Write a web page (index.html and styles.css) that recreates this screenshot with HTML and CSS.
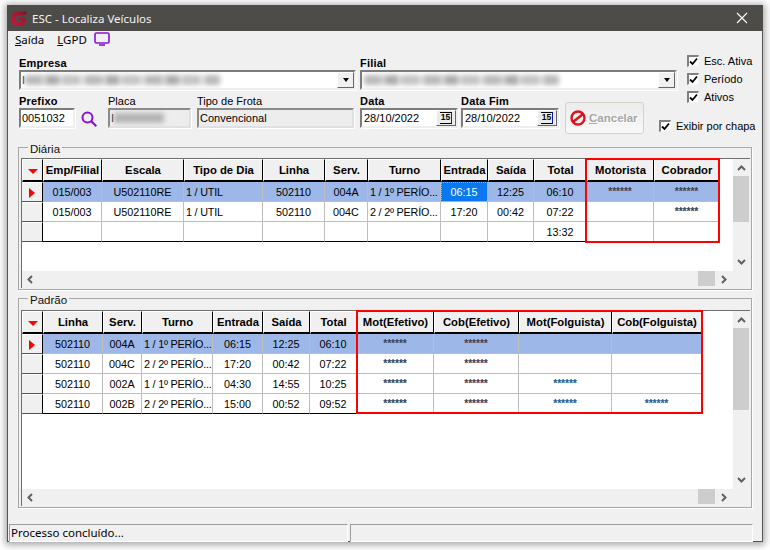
FILE: index.html
```html
<!DOCTYPE html>
<html lang="pt">
<head>
<meta charset="utf-8">
<title>ESC - Localiza Veículos</title>
<link rel="stylesheet" href="styles.css">
</head>
<body>
<div class="window">
  <header class="titlebar">
    <svg class="logo" viewBox="0 0 16 15" width="16" height="15"><defs><linearGradient id="lg" x1="0" y1="1" x2="1" y2="0"><stop offset="0" stop-color="#c81a3c"/><stop offset=".6" stop-color="#a5152f"/><stop offset="1" stop-color="#6e1a28"/></linearGradient></defs><path d="M16 .5H7C3 .5 0 3.800 0 8c0 4 3 6.800 7 6.800h6L14.700 6.500H7.300L6.800 9h3.400l-.5 2.300H7.500c-1.900 0-3.200-1.400-3.200-3.300 0-2.200 1.600-3.800 3.700-3.800h7z" fill="url(#lg)"/></svg>
    <span class="title-text">ESC - Localiza Veículos</span>
    <svg class="close" viewBox="0 0 12 12" width="12" height="12"><path d="M1 1l10 10M11 1L1 11" stroke="#fff" stroke-width="1.100" fill="none"/></svg>
  </header>
  <nav class="menu">
    <span class="menu-item"><u>S</u>aída</span>
    <span class="menu-item"><u>L</u>GPD</span>
    <svg class="tv" viewBox="0 0 16 15" width="16" height="15"><rect x="1" y="1" width="14" height="10" rx="1.500" fill="none" stroke="#8a10d8" stroke-width="1.600"/><path d="M5 13h6" stroke="#8a10d8" stroke-width="1.600"/></svg>
  </nav>
  <section class="form">
    <div class="row-one">
      <div class="field f-empresa">
        <label class="lbl-strong">Empresa</label>
        <div class="input input-white">
          <span class="cursor">I</span><span class="blur b-empresa"></span>
          <span class="combo-btn"><i class="combo-arrow"></i></span>
        </div>
      </div>
      <div class="field f-filial">
        <label class="lbl-strong">Filial</label>
        <div class="input input-white">
          <span class="blur b-filial"></span>
          <span class="combo-btn"><i class="combo-arrow"></i></span>
        </div>
      </div>
    </div>
    <div class="row-two">
      <div class="field f-prefixo">
        <label class="lbl-strong">Prefixo</label>
        <div class="input input-white"><span class="val">0051032</span></div>
      </div>
      <svg class="search" viewBox="0 0 16 16" width="16" height="16"><circle cx="6.500" cy="6.500" r="5" fill="none" stroke="#8a10d8" stroke-width="2"/><path d="M10.300 10.300l5 5" stroke="#8a10d8" stroke-width="2.200"/></svg>
      <div class="field f-placa">
        <label class="lbl">Placa</label>
        <div class="input input-gray"><span class="cursor">I</span><span class="blur b-placa"></span></div>
      </div>
      <div class="field f-tipo">
        <label class="lbl">Tipo de Frota</label>
        <div class="input input-gray"><span class="val">Convencional</span></div>
      </div>
      <div class="field f-data">
        <label class="lbl-strong">Data</label>
        <div class="input input-white"><span class="val val-date">28/10/2022</span><span class="date-btn"><b class="cal">15</b></span></div>
      </div>
      <div class="field f-datafim">
        <label class="lbl-strong">Data Fim</label>
        <div class="input input-white"><span class="val val-date">28/10/2022</span><span class="date-btn"><b class="cal">15</b></span></div>
      </div>
      <button class="cancel" type="button">
        <svg viewBox="0 0 16 16" width="16" height="16"><circle cx="8" cy="8" r="6.500" fill="none" stroke="#e0101c" stroke-width="2.400"/><path d="M3.500 11.500l9-7" stroke="#e0101c" stroke-width="2.600"/></svg>
        <span><u>C</u>ancelar</span>
      </button>
    </div>
    <div class="checks">
      <label class="check"><span class="box"><svg viewBox="0 0 9 9" width="9" height="9"><path d="M1 4.500l2.500 2.500L8 1.500" fill="none" stroke="#000" stroke-width="1.800"/></svg></span>Esc. Ativa</label>
      <label class="check"><span class="box"><svg viewBox="0 0 9 9" width="9" height="9"><path d="M1 4.500l2.500 2.500L8 1.500" fill="none" stroke="#000" stroke-width="1.800"/></svg></span>Período</label>
      <label class="check"><span class="box"><svg viewBox="0 0 9 9" width="9" height="9"><path d="M1 4.500l2.500 2.500L8 1.500" fill="none" stroke="#000" stroke-width="1.800"/></svg></span>Ativos</label>
    </div>
    <label class="check check-chapa"><span class="box"><svg viewBox="0 0 9 9" width="9" height="9"><path d="M1 4.500l2.500 2.500L8 1.500" fill="none" stroke="#000" stroke-width="1.800"/></svg></span>Exibir por chapa</label>
  </section>

  <fieldset class="group group-diaria">
    <legend>Diária</legend>
    <div class="grid-frame grid-frame-diaria">
      <div class="grid-body">
        <table class="grid grid-diaria">
          <colgroup><col class="w21"><col class="w59"><col class="w82"><col class="w79"><col class="w62"><col class="w43"><col class="w73"><col class="w47"><col class="w46"><col class="w53"><col class="w67"><col class="w66"></colgroup>
          <thead><tr><th class="ind"><i class="tri-down"></i></th><th>Emp/Filial</th><th>Escala</th><th>Tipo de Dia</th><th>Linha</th><th>Serv.</th><th>Turno</th><th>Entrada</th><th>Saída</th><th>Total</th><th>Motorista</th><th>Cobrador</th></tr></thead>
          <tbody>
            <tr class="sel"><td class="ind"><i class="tri-right"></i></td><td>015/003</td><td>U502110RE</td><td class="left">1 / UTIL</td><td>502110</td><td>004A</td><td class="left">1 / 1º PERÍO...</td><td class="focus">06:15</td><td>12:25</td><td>06:10</td><td class="stars">******</td><td class="stars">******</td></tr>
            <tr><td class="ind"></td><td>015/003</td><td>U502110RE</td><td class="left">1 / UTIL</td><td>502110</td><td>004C</td><td class="left">2 / 2º PERÍO...</td><td>17:20</td><td>00:42</td><td>07:22</td><td></td><td class="stars">******</td></tr>
            <tr class="last"><td class="ind"></td><td></td><td></td><td></td><td></td><td></td><td></td><td></td><td></td><td>13:32</td><td></td><td></td></tr>
          </tbody>
        </table>
        <div class="red-box red-diaria"></div>
      </div>
      <div class="vbar"><svg class="arrow" viewBox="0 0 9 6" width="9" height="6"><path d="M1 5l3.500-3.500L8 5" fill="none" stroke="#606060" stroke-width="2"/></svg><span class="spacer"></span><span class="vthumb vthumb-d"></span><span class="grow"></span><svg class="arrow" viewBox="0 0 9 6" width="9" height="6"><path d="M1 1l3.500 3.500L8 1" fill="none" stroke="#606060" stroke-width="2"/></svg></div>
      <div class="hbar"><svg class="arrow" viewBox="0 0 6 9" width="6" height="9"><path d="M5 1L1.500 4.500 5 8" fill="none" stroke="#606060" stroke-width="2"/></svg><span class="grow"></span><span class="hthumb"></span><svg class="arrow arrow-r" viewBox="0 0 6 9" width="6" height="9"><path d="M1 1l3.500 3.500L1 8" fill="none" stroke="#606060" stroke-width="2"/></svg></div>
    </div>
  </fieldset>

  <fieldset class="group group-padrao">
    <legend>Padrão</legend>
    <div class="grid-frame grid-frame-padrao">
      <div class="grid-body">
        <table class="grid grid-padrao">
          <colgroup><col class="w21"><col class="w60"><col class="w39"><col class="w71"><col class="w50"><col class="w47"><col class="w47"><col class="w77"><col class="w85"><col class="w93"><col class="w90"></colgroup>
          <thead><tr><th class="ind"><i class="tri-down"></i></th><th>Linha</th><th>Serv.</th><th>Turno</th><th>Entrada</th><th>Saída</th><th>Total</th><th>Mot(Efetivo)</th><th>Cob(Efetivo)</th><th>Mot(Folguista)</th><th>Cob(Folguista)</th></tr></thead>
          <tbody>
            <tr class="sel"><td class="ind"><i class="tri-right"></i></td><td>502110</td><td>004A</td><td class="left">1 / 1º PERÍO...</td><td>06:15</td><td>12:25</td><td>06:10</td><td class="stars">******</td><td class="stars">******</td><td></td><td></td></tr>
            <tr><td class="ind"></td><td>502110</td><td>004C</td><td class="left">2 / 2º PERÍO...</td><td>17:20</td><td>00:42</td><td>07:22</td><td class="stars">******</td><td class="stars">******</td><td></td><td></td></tr>
            <tr><td class="ind"></td><td>502110</td><td>002A</td><td class="left">1 / 1º PERÍO...</td><td>04:30</td><td>14:55</td><td>10:25</td><td class="stars">******</td><td class="stars">******</td><td class="stars stars-blue">******</td><td></td></tr>
            <tr class="last"><td class="ind"></td><td>502110</td><td>002B</td><td class="left">2 / 2º PERÍO...</td><td>15:00</td><td>00:52</td><td>09:52</td><td class="stars">******</td><td class="stars">******</td><td class="stars stars-blue">******</td><td class="stars stars-blue">******</td></tr>
          </tbody>
        </table>
        <div class="red-box red-padrao"></div>
      </div>
      <div class="vbar"><svg class="arrow" viewBox="0 0 9 6" width="9" height="6"><path d="M1 5l3.500-3.500L8 5" fill="none" stroke="#606060" stroke-width="2"/></svg><span class="spacer"></span><span class="vthumb vthumb-p"></span><span class="grow"></span><svg class="arrow" viewBox="0 0 9 6" width="9" height="6"><path d="M1 1l3.500 3.500L8 1" fill="none" stroke="#606060" stroke-width="2"/></svg></div>
      <div class="hbar"><svg class="arrow" viewBox="0 0 6 9" width="6" height="9"><path d="M5 1L1.500 4.500 5 8" fill="none" stroke="#606060" stroke-width="2"/></svg><span class="grow"></span><span class="hthumb"></span><svg class="arrow arrow-r" viewBox="0 0 6 9" width="6" height="9"><path d="M1 1l3.500 3.500L1 8" fill="none" stroke="#606060" stroke-width="2"/></svg></div>
    </div>
  </fieldset>

  <footer class="status">
    <div class="status-main">Processo concluído...</div>
    <div class="status-side"></div>
  </footer>
</div>
</body>
</html>
```
FILE: styles.css
```css
* { box-sizing: border-box; }
html, body { margin: 0; padding: 0; background: #fff; }
body { width: 770px; height: 550px; overflow: hidden; font: 11px "Liberation Sans", Arial, sans-serif; color: #000; }

.window { margin: 5px 0 0 7px; width: 756px; height: 537px; background: #f0f0f0; border: 1px solid #555; border-top: 0; box-shadow: 0 1px 7px 2px rgba(0,0,0,.35); display: flex; flex-direction: column; }

.titlebar { height: 26px; margin: 0 -1px; background: #4e4c49; display: flex; align-items: center; padding: 0 15px 0 4px; color: #fff; flex: none; }
.logo { flex: none; }
.title-text { margin-left: 5px; font: 11.500px "Noto Sans", sans-serif; color: #f4f4f4; }
.close { margin-left: auto; }

.menu { height: 17px; flex: none; display: flex; align-items: center; padding-left: 7px; gap: 13px; font: 11.500px "Noto Sans", sans-serif; }
.tv { margin-left: -6px; }

.form { flex: none; height: 97px; padding: 9px 0 0 11px; display: grid; grid-template-columns: 640px 28px 1fr; grid-template-rows: 38px 1fr; }
.row-one { grid-column: 1 / 3; grid-row: 1; display: flex; gap: 4px; }
.row-two { grid-column: 1; grid-row: 2; display: flex; align-items: flex-start; }
.field { display: flex; flex-direction: column; }
.f-empresa { width: 337px; }
.f-filial { width: 317px; }
.f-prefixo { width: 56px; }
.f-placa { width: 83px; }
.f-tipo { width: 157px; margin-left: 6px; }
.f-data { width: 98px; margin-left: 6px; }
.f-datafim { width: 98px; margin-left: 3px; }
.lbl-strong, .lbl { height: 13px; line-height: 13px; white-space: nowrap; }
.lbl-strong { font-size: 11px; font-weight: 700; letter-spacing: .2px; }
.lbl { font-size: 11px; }
.input { height: 20px; position: relative; display: flex; align-items: center; border: 2px solid; border-color: #7c7c7c #eee #eee #7c7c7c; box-shadow: 1px 1px 0 #fff; overflow: hidden; font-size: 11px; white-space: nowrap; }
.input-white { background: #fff; }
.input-gray { background: #ededed; border-color: #8a8a8a #e0e0e0 #e0e0e0 #8a8a8a; }
.val { padding-left: 1px; }
.val-date { padding-left: 2px; }
.cursor { padding-left: 1px; color: #333; width: 4px; flex: none; }
.blur { display: block; height: 10px; filter: blur(2.500px); background: repeating-linear-gradient(90deg, #a8a8a8 0 17px, #d2d2d2 17px 21px, #969696 21px 34px, #dcdcdc 34px 37px, #b4b4b4 37px 55px, #d8d8d8 55px 60px); opacity: .8; flex: none; }
.b-empresa { width: 195px; }
.b-filial { width: 195px; margin-left: 2px; }
.b-placa { width: 50px; background: #a6a6a6; }

.combo-btn { position: absolute; right: 0; top: 0; width: 17px; height: 16px; background: #f0f0f0; border: 1px solid; border-color: #fff #666 #666 #fff; display: flex; align-items: center; justify-content: center; }
.combo-arrow { display: block; width: 0; height: 0; border: 3.500px solid transparent; border-top: 4px solid #000; border-bottom: 0; }
.date-btn { position: absolute; right: 0; top: 0; width: 20px; height: 16px; background: #ececec; border: 1px solid; border-color: #fff #666 #666 #fff; display: flex; align-items: center; justify-content: center; }
.cal { font: 700 8.500px/9px "Liberation Sans", sans-serif; color: #000; border-right: 1px solid #1018b0; border-bottom: 1px solid #000; border-top: 1px solid #000; width: 12px; height: 12px; text-align: center; display: block; }

.search { flex: none; margin: 16px 11px 0 6px; }
.cancel { margin: 7px 0 0 6px; width: 79px; height: 32px; padding: 0 0 0 4px; background: linear-gradient(#ececec, #f8f8f8); border: 1px solid #d6d2ca; border-radius: 3px; display: flex; align-items: center; gap: 3px; font: 700 11.500px "Liberation Sans", sans-serif; color: #a6a6a6; text-shadow: 1px 1px 0 #fff; }

.checks { grid-column: 3; grid-row: 1 / 3; margin-top: -3px; display: flex; flex-direction: column; gap: 5px; }
.check { display: flex; align-items: center; height: 13px; gap: 5px; font-size: 11px; white-space: nowrap; }
.box { width: 12px; height: 12px; flex: none; background: #fff; border-style: solid; border-width: 2px 1px 1px 2px; border-color: #808080 #f4f4f4 #f4f4f4 #808080; display: flex; align-items: center; justify-content: center; }
.check-chapa { grid-column: 2 / 4; grid-row: 2; margin-top: 24px; }

.group { margin: 0 0 0 10px; padding: 0; width: 734px; border: 1px solid #a8a8a8; flex: none; min-width: 0; box-shadow: 1px 1px 0 #fff; }
.group legend { margin-left: 9px; padding: 0 2px; font-size: 11.500px; line-height: 9px; height: 5px; color: #111; }
.group-diaria { height: 145px; }
.group-padrao { height: 212px; margin-top: 6px; }

.grid-frame { margin: 8px 1px 0 2px; display: grid; grid-template-columns: 711px 16px; border-top: 1px solid #6e6e6e; border-left: 1px solid #6e6e6e; }
.grid-frame-diaria { grid-template-rows: 112px 17px; }
.grid-frame-padrao { margin-top: 9px; grid-template-rows: 178px 17px; }
.grid-body { position: relative; background: #fff; }

.grid { border-collapse: separate; border-spacing: 0; table-layout: fixed; font-size: 10.800px; }
.grid-diaria { width: 698px; }
.grid-padrao { width: 680px; }
.grid th, .grid td { padding: 0; text-align: center; white-space: nowrap; overflow: hidden; }
.grid th { height: 23px; background: #f0f0f0; font-weight: 700; font-size: 11.300px; border-right: 1px solid #000; border-left: 1px solid #fff; border-top: 1px solid #fff; border-bottom: 2px solid #000; }
.grid td { height: 20px; border-right: 1px solid #bdbdbd; border-bottom: 1px solid #bdbdbd; }
.grid td.left { text-align: left; padding-left: 2px; letter-spacing: -.2px; }
.grid .last td { border-bottom-color: #000; }
.grid .sel td { background: #9db8e8; }
.grid td.ind, .grid .sel td.ind { background: #f0f0f0; border-right: 1px solid #000; border-bottom: 1px solid #555; border-top: 1px solid #fff; }
.grid td.focus, .grid .sel td.focus { background: #0a78f0; color: #fff; outline: 1px dotted #f0a020; outline-offset: -1px; }
.grid td.stars { font-size: 10px; font-weight: 700; line-height: 11px; color: #34456a; text-shadow: .5px 0 rgba(210,140,40,.55); vertical-align: top; padding-top: 4px; }
.grid td.stars-blue { color: #1d5fa8; }
.tri-down { display: inline-block; width: 0; height: 0; border: 5px solid transparent; border-top: 5px solid #f00; border-bottom: 0; vertical-align: middle; }
.tri-right { display: inline-block; width: 0; height: 0; border: 5.500px solid transparent; border-left: 6px solid #f00; border-right: 0; vertical-align: middle; }

.w21 { width: 21px; } .w39 { width: 39px; } .w43 { width: 43px; } .w46 { width: 46px; } .w47 { width: 47px; } .w50 { width: 50px; } .w53 { width: 53px; } .w59 { width: 59px; } .w60 { width: 60px; } .w62 { width: 62px; } .w66 { width: 66px; } .w67 { width: 67px; } .w71 { width: 71px; } .w73 { width: 73px; } .w77 { width: 77px; } .w79 { width: 79px; } .w82 { width: 82px; } .w85 { width: 85px; } .w90 { width: 90px; } .w93 { width: 93px; }

.red-box { position: absolute; top: -1px; border: 2px solid #f00; pointer-events: none; }
.red-diaria { left: 563px; width: 135px; height: 85px; }
.red-padrao { left: 334px; width: 347px; height: 104px; }

.vbar { background: #f0f0f0; display: flex; flex-direction: column; align-items: center; padding: 6px 0; }
.vthumb { width: 16px; background: #cdcdcd; flex: none; }
.spacer { height: 5px; flex: none; }
.vthumb-d { height: 46px; }
.vthumb-p { height: 82px; }
.hbar { grid-column: 1 / 3; background: #f0f0f0; display: flex; align-items: center; padding-left: 5px; }
.grow { flex: 1; }
.hthumb { width: 17px; height: 15px; align-self: flex-start; background: #cdcdcd; flex: none; margin-right: 6px; }
.arrow { flex: none; }
.arrow-r { margin-right: 22px; }

.status { margin: 16px 0 0 1px; height: 18px; display: flex; gap: 2px; flex: none; }
.status-main, .status-side { border-top: 1px solid #9c9c9c; border-left: 1px solid #9c9c9c; border-right: 1px solid #fff; border-bottom: 1px solid #fff; height: 18px; }
.status-main { width: 339px; padding-left: 1px; font: 11.500px/16px "Noto Sans", sans-serif; }
.status-side { width: 403px; }
```
